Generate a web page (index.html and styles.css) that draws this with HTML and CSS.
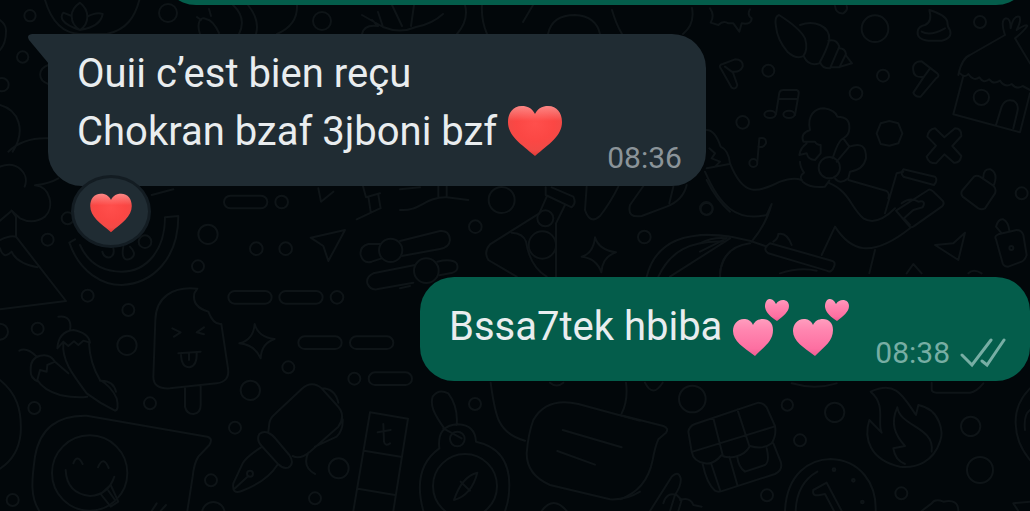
FILE: index.html
```html
<!DOCTYPE html>
<html lang="fr">
<head>
<meta charset="utf-8">
<meta name="viewport" content="width=device-width, initial-scale=1">
<title>Chat</title>
<link rel="stylesheet" href="styles.css">
</head>
<body>
<svg class="wallpaper" viewBox="0 0 1030 511" preserveAspectRatio="xMidYMid slice" aria-hidden="true">
  <!-- top strip -->
  <g class="thin">
    <circle cx="168" cy="13" r="9"/><circle cx="322" cy="21" r="9"/>
    <path d="M200 34C196 22 201 16 206 19Q213 20 219 33M211 16L209 9M201 20L197 17M233 5Q247 18 239 34M248 5Q260 20 256 34M277 34Q298 25 297 5M362 34Q364 24 378 26L372 20M362 15L383 27L378 12M383 27Q400 34 416 27Q432 24 443 14M392 5L402 26M414 5L411 26M465 5Q469 20 457 34M482 5Q481 20 487 34M523 22L533 5M548 34Q552 15 575 15Q596 16 600 34M612 10Q616 24 622 34M692 8Q695 24 683 34"/>
  </g>
  <!-- left edge -->
  <g transform="scale(.33333)">
    <circle cx="90" cy="47" r="17"/><circle cx="68" cy="171" r="17"/><circle cx="6" cy="254" r="20"/><circle cx="203" cy="655" r="18"/><circle cx="143" cy="719" r="18"/><circle cx="624" cy="703" r="29"/>
    <path d="M135 0C150 50 180 100 240 102H320C380 90 405 50 418 0M240 90C180 70 180 50 190 38L215 48Q215 25 240 8Q262 25 262 50Q290 35 308 42Q302 80 240 90ZM215 48Q215 75 240 90M262 50Q262 75 240 90M0 60Q20 75 18 95Q18 130 0 150M145 195C115 205 110 240 145 252M0 315C55 330 80 390 38 455M25 455Q70 412 145 415M0 500C50 480 90 520 74 560M105 556C150 560 165 620 135 650Q100 675 60 655L35 632L0 662M105 556Q150 550 175 535"/>
  </g>
  <!-- lower left -->
  <g transform="translate(0 180) scale(.33333)">
    <path d="M35 92L48 110V170L198 363L0 388M0 180Q30 165 48 170M0 205Q10 240 35 215Q50 250 112 262"/>
    <path d="M208 188L225 178M208 188C240 280 310 315 365 315C460 310 535 235 535 108L495 112C495 210 440 275 365 275C310 275 265 250 240 195M307 215Q312 235 330 232Q345 225 340 205M370 200C362 240 380 242 392 236C410 225 400 210 390 200M455 45L520 28"/>
    <circle cx="435" cy="185" r="19"/><circle cx="263" cy="347" r="18"/><circle cx="385" cy="390" r="18"/><circle cx="381" cy="496" r="29"/><circle cx="113" cy="446" r="18"/><circle cx="0" cy="455" r="24"/><circle cx="103" cy="684" r="18"/><circle cx="450" cy="670" r="18"/><circle cx="594" cy="259" r="18"/><circle cx="769" cy="206" r="19"/><circle cx="857" cy="206" r="19"/><circle cx="845" cy="66" r="19"/><circle cx="1011" cy="352" r="19"/><circle cx="865" cy="562" r="18"/><circle cx="1063" cy="596" r="18"/><circle cx="751" cy="631" r="29"/><circle cx="705" cy="743" r="18"/><circle cx="633" cy="901" r="18"/><circle cx="38" cy="960" r="18"/><circle cx="640" cy="1000" r="34"/>
    <rect x="672" y="47" width="130" height="38" rx="19"/><rect x="685" y="333" width="130" height="38" rx="19"/><rect x="838" y="333" width="130" height="38" rx="19"/><rect x="895" y="469" width="130" height="38" rx="19"/><rect x="1050" y="469" width="130" height="38" rx="19"/><rect x="1106" y="577" width="130" height="38" rx="19"/>
    <path d="M932 173L1035 150L985 243L970 198ZM955 25L963 65L1000 35M1088 15L1098 52L1140 40M1105 50L1112 95M1135 45L1142 85M1070 118L1140 85"/>
    <path d="M592 326C520 318 468 350 466 420L460 590Q460 628 510 625L650 610Q690 605 684 565L664 432Q640 435 625 395Q575 380 583 340ZM555 625V680Q560 702 580 702Q602 700 602 675V617M517 445L542 457L522 470M612 442L590 457L612 463M535 520L602 515M543 520Q543 562 568 562Q592 558 590 518M567 520V540"/>
    <path d="M764 432Q775 472 824 477Q784 490 782 535Q765 495 718 490Q760 480 764 432Z"/>
    <path d="M175 410C205 405 215 425 210 450M172 505Q175 455 220 450Q265 458 270 488L250 482L235 495L222 484L205 498L190 485ZM190 488C185 540 215 580 260 640Q300 670 345 692Q358 690 350 655Q335 620 300 600Q270 550 267 490M300 602Q340 600 348 635M58 512Q80 500 110 530M120 527Q90 535 92 570Q90 595 115 605M120 527Q150 520 165 545L142 555L140 575L120 570L112 600Q130 630 180 645Q230 655 262 650M165 545L205 580"/>
    <path d="M0 600C50 640 66 690 62 760Q55 830 0 866"/>
    <path d="M118 993C90 950 95 900 105 830C120 740 180 705 260 707L622 770Q640 775 628 795L595 830Q582 850 578 890L562 993M455 993L470 970M482 993L498 975"/>
    <circle cx="269" cy="879" r="113"/>
    <path d="M220 850Q232 820 248 852M294 862Q310 825 326 864M197 870Q200 940 270 948Q325 945 343 890M302 942L332 915M302 942L332 980L355 965L332 915M325 932L345 960"/>
    <path d="M805 755L808 730Q810 715 825 702L905 627Q935 600 965 625L1010 675Q1040 705 1015 740L930 815Q900 840 878 828M778 762C795 748 815 760 830 780L868 825Q885 850 865 863Q850 868 835 853L785 798Q768 780 778 762ZM782 803Q740 830 728 850L700 910Q695 945 725 933Q800 905 832 855M705 925L745 888M965 625Q1005 625 1015 668M1028 718Q1030 750 1010 770L945 800M925 818Q905 860 945 882"/>
    <circle cx="750" cy="881" r="9"/><circle cx="1016" cy="865" r="30"/><circle cx="945" cy="955" r="18"/>
    <path d="M1060 993L1110 697L1224 716L1180 993M1092 812L1202 830M1074 926L1185 945M1150 732L1152 785Q1155 800 1170 790M1133 757L1172 750"/>
  </g>
  <!-- middle -->
  <g transform="translate(400 180) scale(.33333)">
    <circle cx="305" cy="60" r="39"/><circle cx="226" cy="140" r="19"/><circle cx="436" cy="115" r="24"/><circle cx="427" cy="195" r="41"/><circle cx="733" cy="171" r="19"/><circle cx="919" cy="85" r="19"/><circle cx="79" cy="272" r="37"/><circle cx="-28" cy="211" r="35"/>
    <path d="M0 90C60 95 75 50 140 52L205 60M115 18V52M140 18V52M0 28L60 22M-60 192H-95Q-122 200-118 225Q-110 252-85 245L-55 235M0 183L120 153Q148 150 150 180Q148 202 120 207L5 228M45 255L-80 280Q-102 290-98 310Q-90 330-70 328L40 308M112 245Q155 235 170 250Q180 275 150 280L118 286M0 325L30 318"/>
    <path d="M437 22V45L515 82Q530 70 520 50L455 22M440 50L418 100L270 193Q250 215 265 240L350 290M495 75L468 130V290M335 158Q370 160 378 185Q390 260 440 290M560 20L555 90Q570 135 600 108Q630 70 655 20M730 18L690 75Q680 115 725 108L800 80Q850 60 860 15M820 20L808 70"/>
    <path d="M585 172Q597 210 648 217Q607 230 604 277Q590 235 545 230Q580 220 585 172ZM740 290C765 190 850 150 990 170M775 290C810 215 870 180 975 185M810 290L990 175M960 290Q960 240 990 215M920 0Q950 60 990 95"/>
  </g>
  <!-- right -->
  <g transform="translate(700 0) scale(.33333)">
    <path d="M30 25Q45 45 32 68L55 75Q70 60 85 70L100 70L118 95L125 70Q155 75 155 55Q140 45 150 28M405 18Q408 42 430 40Q445 30 440 18"/>
    <path d="M237 45Q222 50 228 80Q232 120 262 155Q290 180 310 168Q325 150 315 115Q300 85 237 45ZM300 75C340 60 390 75 388 120Q380 150 358 190Q325 200 312 170M385 122Q410 115 418 140L390 205Q365 205 360 185M418 145Q435 145 438 162L418 202L392 202M437 165L456 190L420 200"/>
    <circle cx="525" cy="86" r="40"/><circle cx="840" cy="66" r="18"/><circle cx="205" cy="212" r="18"/><circle cx="549" cy="227" r="18"/><circle cx="468" cy="280" r="19"/><circle cx="128" cy="367" r="19"/><circle cx="844" cy="292" r="23"/><circle cx="965" cy="580" r="18"/><circle cx="20" cy="627" r="18"/>
    <path d="M688 30Q698 65 675 75Q655 78 653 95Q650 118 685 122H725Q758 115 750 90Q742 80 742 65Q738 45 688 30ZM665 95Q690 110 735 85"/>
    <path d="M62 205Q55 195 68 192L105 178Q130 178 128 200Q120 218 98 215L112 255Q108 270 95 263ZM75 200L95 215M640 212Q635 185 665 184L712 220Q720 228 708 235L662 290Q645 292 640 278L672 230Q642 235 640 212ZM672 230L690 205"/>
    <path d="M228 342L238 278Q240 270 250 270H290Q298 272 296 282L285 345M236 297H292"/><ellipse cx="210" cy="343" rx="17" ry="11"/><ellipse cx="267" cy="343" rx="17" ry="11"/>
    <path d="M172 485L178 415Q200 410 198 430Q190 445 175 440"/><circle cx="160" cy="489" r="12"/>
    <path d="M530 400L542 370L568 363L595 370L607 400L595 430L568 437L542 432ZM733 412L765 385Q785 385 784 408L757 438L784 468Q780 490 762 488L733 463L708 490Q685 490 680 470L708 437L682 410Q685 388 705 385Z"/>
    <path d="M330 390C320 345 345 325 372 325Q405 330 412 350Q450 350 448 385Q448 405 430 415Q415 420 398 475M330 390Q300 400 310 425L345 425Q350 435 362 435V460L345 480Q325 480 320 460L298 465Q300 445 320 430M300 485Q300 500 312 518Q295 530 308 545Q330 565 375 560L388 542M430 415L448 440Q500 420 498 475Q490 510 450 515L445 535Q420 555 405 535M448 440L410 485"/><circle cx="388" cy="503" r="32"/>
    <path d="M20 390Q45 390 62 440Q85 450 90 490C130 590 170 580 240 545Q280 530 305 540M28 445L45 460L35 475L60 485L45 500L20 505L88 492M15 515C60 620 110 665 200 645L215 612Q200 670 155 725M385 548C450 575 450 620 490 655Q530 680 585 625M445 540L560 573Q570 580 565 595M555 640L590 520L610 515M365 765L405 680C450 750 510 780 630 685M525 750L508 820"/>
    <path d="M610 508L705 530Q715 540 702 555L610 530Q600 520 610 508ZM588 632L685 570Q690 565 700 575L728 602Q735 612 725 620L640 680Q630 685 625 675ZM605 610Q630 590 655 605Q680 600 668 622L640 630L612 655L630 675"/>
    <path d="M0 705Q100 700 200 740M0 730Q40 710 80 715L0 755M60 820Q70 740 150 730M210 730L395 782Q408 785 402 800Q395 820 380 812L205 760Q190 750 200 738ZM220 725Q235 715 235 702Q260 695 275 735M240 820Q300 800 350 812M620 820L640 792L665 820"/>
    <path d="M775 225Q785 175 810 165L915 105M915 105Q900 60 918 55Q932 55 932 85Q940 45 958 50Q965 60 950 90Q980 70 982 78Q970 95 945 115L990 190M780 220Q795 235 805 222Q820 245 838 232Q850 252 868 238Q880 255 900 242Q915 265 935 252Q950 270 968 258L990 270M790 228L760 343L960 397L990 280M888 375L905 320Q915 295 940 302Q958 312 952 335L940 385"/>
    <path d="M822 530Q830 525 840 530L880 557Q890 565 885 580L855 625Q845 630 835 625L788 590Q780 580 788 570ZM850 532Q850 505 872 508Q895 520 882 555M888 718Q882 708 895 703L950 690Q965 690 970 705L980 765Q975 780 965 785L925 800Q912 800 908 790ZM905 700L888 680Q895 655 910 658Q925 665 928 692M705 735L760 730L795 698L775 780ZM805 820Q820 805 845 820"/>
    <circle cx="934" cy="744" r="6"/>
  </g>
  <!-- compass and card -->
  <g transform="translate(220 370) scale(.33333)">
    <path d="M675 178C640 130 630 105 638 80Q655 55 685 70Q715 110 710 165M658 235Q650 165 715 163Q765 165 768 215C840 230 868 280 868 345Q868 390 855 423M658 235C595 280 590 350 610 423M670 175L725 205M812 38C825 130 830 190 915 212M1218 38Q1225 90 1205 130"/>
    <circle cx="712" cy="207" r="22"/><circle cx="735" cy="348" r="96"/><circle cx="765" cy="102" r="18"/><path d="M772 308Q725 320 702 390Q755 375 772 308ZM722 335L750 362M965 423Q1000 375 1040 423M990 38Q1010 55 1030 38"/>
    <path d="M1260 152L1075 102Q980 80 940 150Q925 190 920 250Q920 315 990 345L1170 388Q1220 390 1260 365M1028 180L1205 232M1012 243L1125 284"/>
  </g>
  <!-- lower right -->
  <g transform="translate(620 370) scale(.33333)">
    <path d="M0 135L130 168Q148 175 138 188L115 208Q105 230 98 270Q80 360 0 388M75 38Q98 85 128 38M515 40Q585 60 650 40M90 423L155 320Q175 300 182 325Q185 345 165 375L150 423M130 400Q140 365 170 375L185 390L175 423M180 390Q210 380 220 405L245 410"/>
    <circle cx="217" cy="87" r="40"/><circle cx="502" cy="105" r="17"/><circle cx="644" cy="127" r="29"/><circle cx="540" cy="211" r="18"/><circle cx="441" cy="376" r="18"/><circle cx="844" cy="370" r="18"/><circle cx="1052" cy="169" r="29"/><circle cx="1080" cy="300" r="39"/>
    <path d="M205 185Q208 168 225 162L415 98Q430 98 440 112L465 168Q470 195 455 220Q430 240 390 228Q375 255 345 260Q315 265 305 255Q280 285 255 280Q220 275 215 245ZM218 245L462 170M280 145L308 255M352 118L388 228M248 282Q260 340 285 362Q295 368 310 362L465 312Q490 300 482 275L460 220M275 285L300 360M328 260L352 345M352 262Q355 290 375 305L435 285Q450 275 440 235"/>
    <path d="M752 65C830 30 850 80 888 135L895 105C965 120 970 190 960 215C940 275 890 295 840 290C750 270 730 205 748 150L785 188C770 160 800 105 752 65ZM832 112C840 170 945 170 935 245M832 112C810 160 825 195 855 228L820 235Q825 270 855 282"/>
    <path d="M495 423C500 310 570 268 632 267C720 270 770 340 767 423M527 423Q530 340 592 305M580 360L620 338L665 423M580 360Q575 380 600 375L615 372L642 423M935 38V58Q935 68 950 68H1050Q1070 65 1090 40M905 423L935 400Q945 385 970 395Q1015 385 1015 423M1230 55Q1185 100 1187 160Q1188 220 1230 270M1230 120Q1210 135 1215 180M1180 400L1230 395M1180 400L1195 423"/>
    <circle cx="642" cy="299" r="4"/><circle cx="700" cy="331" r="4"/><circle cx="727" cy="396" r="4"/>
  </g>
</svg>

<svg class="defs" aria-hidden="true">
  <defs>
    <radialGradient id="red" cx=".5" cy=".35" r=".7"><stop offset="0" stop-color="#ff4f4c"/><stop offset=".5" stop-color="#fb4744"/><stop offset=".75" stop-color="#f24a46"/><stop offset="1" stop-color="#d93532"/></radialGradient>
    <linearGradient id="shine" x1="0" y1="0" x2="0" y2="1"><stop offset="0" stop-color="#fff" stop-opacity=".35"/><stop offset=".3" stop-color="#fff" stop-opacity="0"/></linearGradient>
    <linearGradient id="pink" x1="0" y1="0" x2="0" y2="1"><stop offset="0" stop-color="#ff9dbe"/><stop offset=".3" stop-color="#ff86b0"/><stop offset=".8" stop-color="#fd6fa1"/><stop offset="1" stop-color="#ee5c92"/></linearGradient>
    <path id="heart-shape" d="M28 9C25 3 20 1 15 1C6 1 1 8 1 17C1 31 14 39 28 51C42 39 55 31 55 17C55 8 50 1 41 1C36 1 31 3 28 9Z"/>
    <symbol id="heart" viewBox="0 0 56 52"><use href="#heart-shape" fill="url(#red)"/><use href="#heart-shape" fill="url(#shine)"/></symbol>
    <symbol id="two-hearts" viewBox="0 0 58 60"><path fill="url(#pink)" d="M21 27C19 22 15 21 12 21C5 21 1 27 1 33C1 43 11 49 23 58C33 48 41 43 41 32C41 25 37 21 31 21C26 21 23 23 21 27Z"/><path fill="url(#pink)" d="M44 6C42 2 40 1 37 1C34 2 33 5 33 9C34 15 39 19 45 23C51 18 57 14 57 8C57 4 54 2 51 2C48 2 46 3 44 6Z"/></symbol>
  </defs>
</svg>

<main class="chat">
  <div class="previous"><div class="bubble outgoing earlier"></div></div>

  <article class="bubble incoming">
    <svg class="tail" viewBox="0 0 21 30" aria-hidden="true"><path d="M21 0H4Q-2 1 1 6L21 30Z"/></svg>
    <p class="text">Ouii c’est bien reçu<br>Chokran bzaf 3jboni bzf <svg class="heart" role="img" aria-label="❤️"><use href="#heart"/></svg></p>
    <footer class="meta"><time datetime="08:36">08:36</time></footer>
    <button class="reaction" type="button" aria-label="❤️ 1"><svg class="small-heart"><use href="#heart"/></svg></button>
  </article>

  <article class="bubble outgoing reply">
    <p class="text">Bssa7tek hbiba <svg class="two-hearts" role="img" aria-label="💕"><use href="#two-hearts"/></svg><svg class="two-hearts" role="img" aria-label="💕"><use href="#two-hearts"/></svg></p>
    <footer class="meta"><time datetime="08:38">08:38</time>
      <svg class="ticks" viewBox="0 0 46 30" role="img" aria-label="✓✓"><path d="M2 17L12 27L31 2M22 23L27 27L44 2"/></svg>
    </footer>
  </article>
</main>
</body>
</html>
```

FILE: styles.css
```css
* {
  box-sizing: border-box;
}

body {
  margin: 0;
  min-height: 100vh;
  overflow-x: hidden;
  background: #02070a;
  color: #e9edef;
  font-family: Roboto, "Liberation Sans", sans-serif;
}

.wallpaper {
  position: absolute;
  inset: 0;
  z-index: -1;
  width: 100%;
  height: 100%;
  fill: none;
  stroke: #0e1417;
  stroke-width: 6px;
  stroke-linecap: round;
  stroke-linejoin: round;
}

.thin {
  stroke-width: 2px;
}

.defs {
  position: absolute;
  width: 0;
  height: 0;
}

.chat {
  display: flex;
  flex-direction: column;
  align-items: flex-start;
}

.previous {
  display: flex;
  flex-direction: column;
  justify-content: flex-end;
  align-self: stretch;
  height: 5px;
  margin-bottom: 29px;
  padding-left: 162px;
  overflow: hidden;
}

.bubble {
  position: relative;
  display: flex;
  align-items: flex-end;
  border-radius: 34px;
  padding: 10px 24px 10px 29px;
}

.incoming {
  margin-left: 48px;
  gap: 44px;
  border-top-left-radius: 0;
  background: #202c33;
}

.outgoing {
  background: #045d4b;
}

.earlier {
  flex: none;
  height: 80px;
}

.reply {
  align-self: flex-end;
  gap: 23px;
  margin-top: 91px;
}

.text {
  margin: 0;
  padding: 1px 0 15px;
  font-size: 40px;
  line-height: 58px;
}

.reply .text {
  padding-top: 11px;
}

.meta {
  display: flex;
  align-items: center;
  gap: 10px;
  color: #8b9499;
  font-size: 30px;
  line-height: 36px;
}

.outgoing .meta {
  color: #77aea4;
}

.tail {
  position: absolute;
  top: 0;
  left: -20px;
  width: 21px;
  height: 30px;
  fill: #202c33;
}

.heart {
  width: 56px;
  height: 52px;
  vertical-align: -12px;
}

.two-hearts {
  width: 58px;
  height: 60px;
  margin: -4px 2px -4px 0;
  vertical-align: -14px;
}

.reaction {
  position: absolute;
  top: 141px;
  left: 23px;
  display: flex;
  align-items: center;
  justify-content: center;
  width: 80px;
  height: 73px;
  padding: 2px 0 0;
  border: 3px solid #131c22;
  border-radius: 50%;
  background: #202c33;
}

.small-heart {
  width: 46px;
  height: 40px;
}

.ticks {
  width: 46px;
  height: 30px;
  fill: none;
  stroke: currentColor;
  stroke-width: 3px;
  stroke-linecap: round;
}
```
